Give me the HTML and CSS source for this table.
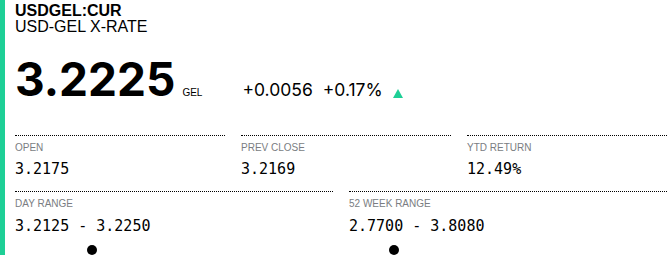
FILE: index.html
```html
<!DOCTYPE html>
<html lang="en">
<head>
<meta charset="utf-8">
<title>USDGEL:CUR</title>
<link rel="stylesheet" href="styles.css">
</head>
<body>
<div class="page">
  <div class="accent"></div>
  <main class="main">
    <header class="header">
      <h1 class="ticker">USDGEL:CUR</h1>
      <div class="name">USD-GEL X-RATE</div>
    </header>
    <div class="quote">
      <span class="price">3.2225</span>
      <span class="currency">GEL</span>
      <span class="change">+0.0056</span>
      <span class="change change-pct">+0.17%</span>
      <svg class="arrow" width="10" height="9" viewBox="0 0 10 9" aria-hidden="true"><polygon points="5,0 10,9 0,9"/></svg>
    </div>
    <section class="stats stats-three">
      <div class="cell">
        <div class="label">OPEN</div>
        <div class="value">3.2175</div>
      </div>
      <div class="cell">
        <div class="label">PREV CLOSE</div>
        <div class="value">3.2169</div>
      </div>
      <div class="cell">
        <div class="label">YTD RETURN</div>
        <div class="value">12.49%</div>
      </div>
    </section>
    <section class="stats stats-two">
      <div class="cell">
        <div class="label">DAY RANGE</div>
        <div class="value">3.2125 - 3.2250</div>
        <div class="range"><span class="dot" style="left: 77%"></span></div>
      </div>
      <div class="cell">
        <div class="label">52 WEEK RANGE</div>
        <div class="value">2.7700 - 3.8080</div>
        <div class="range"><span class="dot" style="left: 45%"></span></div>
      </div>
    </section>
  </main>
</div>
</body>
</html>
```

FILE: styles.css
```css
html, body {
  margin: 0;
  padding: 0;
  background: #fff;
  overflow: hidden;
}

.page {
  display: flex;
  width: 668px;
  height: 255px;
  overflow: hidden;
  color: #000;
  font-family: "Liberation Sans", Arial, sans-serif;
}

.accent {
  flex: 0 0 5px;
  background: #1ecf96;
}

.main {
  flex: 1;
  min-width: 0;
  padding-left: 10px;
}

.header {
  padding-top: 3px;
}

.ticker {
  margin: 0;
  font-size: 16px;
  line-height: 16px;
  font-weight: 700;
}

.name {
  font-size: 16px;
  line-height: 16px;
}

.quote {
  display: flex;
  align-items: baseline;
  margin-top: 21px;
}

.price {
  font-family: Inter, "Liberation Sans", sans-serif;
  font-weight: 700;
  font-size: 46px;
  line-height: 47px;
}

.currency {
  margin-left: 7px;
  font-size: 10px;
  line-height: 12px;
}

.change {
  font-family: Inter, "Liberation Sans", sans-serif;
  font-size: 17.5px;
  line-height: 20px;
  margin-left: 40px;
}

.change-pct {
  margin-left: 10px;
}

.arrow {
  margin-left: 10px;
  fill: #1ecf96;
  position: relative;
  top: 2px;
}

.stats {
  display: grid;
  column-gap: 16px;
}

.stats-three {
  margin-top: 32px;
  grid-template-columns: repeat(3, 210px);
}

.stats-two {
  grid-template-columns: repeat(2, 318px);
}

.cell {
  border-top: 1px dotted #000;
  padding-top: 6px;
}

.stats-three .cell {
  padding-bottom: 13px;
}

.label {
  font-size: 10px;
  line-height: 12px;
  color: #7a7d82;
}

.value {
  margin-top: 6px;
  font-family: "DejaVu Sans Mono", "Liberation Mono", monospace;
  font-size: 15px;
  line-height: 18px;
}

.stats-two .value {
  margin-top: 7px;
}

.range {
  position: relative;
  width: 100px;
  height: 10px;
  margin-top: 10px;
}

.dot {
  position: absolute;
  top: 0;
  width: 10px;
  height: 10px;
  border-radius: 50%;
  background: #000;
  transform: translateX(-50%);
}
```
